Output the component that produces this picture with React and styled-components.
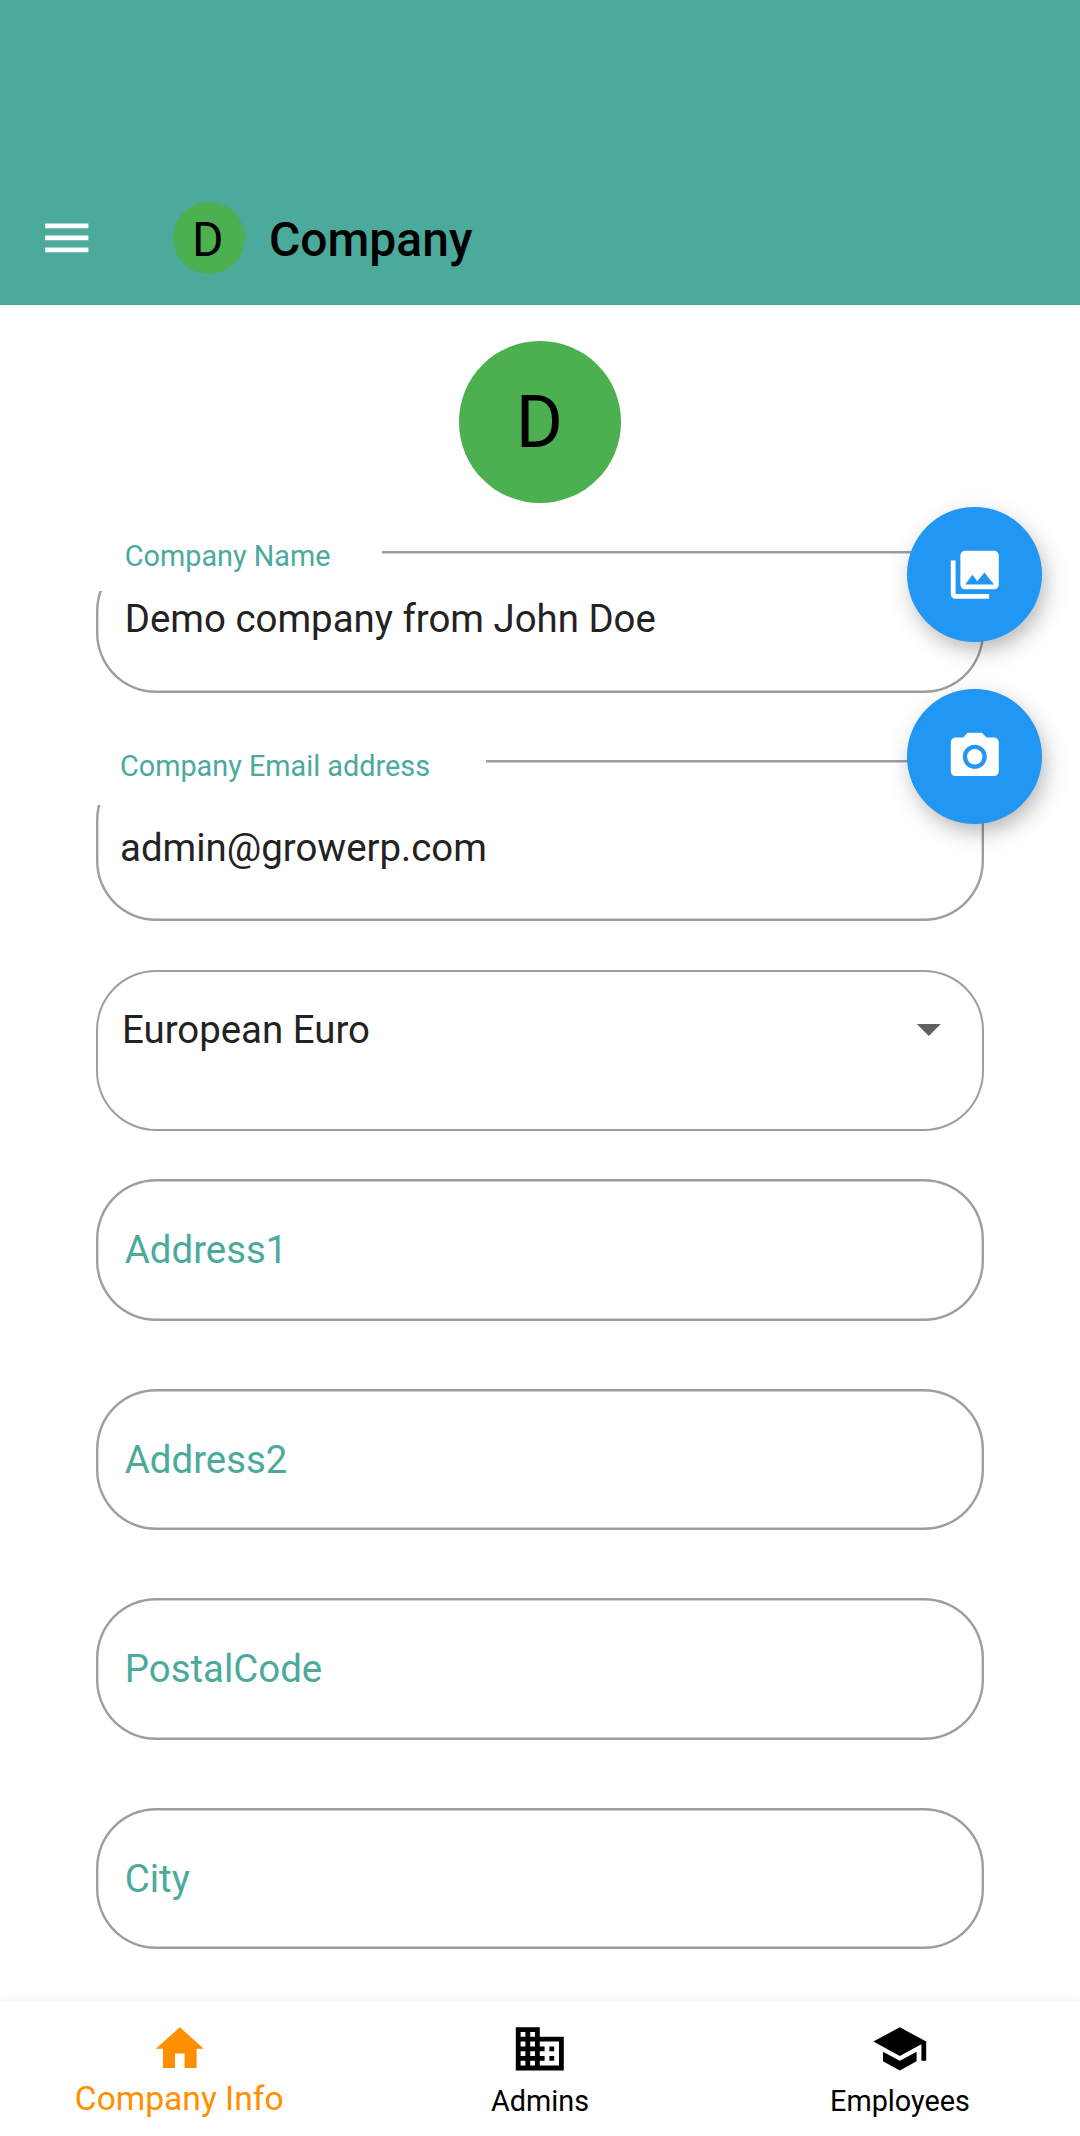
import React from "react";
import styled, { createGlobalStyle } from "styled-components";
import {
  MdArrowDropDown,
  MdBusiness,
  MdCameraAlt,
  MdHome,
  MdMenu,
  MdPhotoLibrary,
  MdSchool,
} from "react-icons/md";

const GlobalStyle = createGlobalStyle`
  *, *::before, *::after { box-sizing: border-box; }
  body {
    margin: 0;
    background: #fff;
    font-family: Roboto, "Liberation Sans", sans-serif;
  }
  button { font: inherit; border: 0; padding: 0; background: none; }
`;

const Screen = styled.div`
  position: relative;
  width: 1080px;
  height: 2136px;
  display: flex;
  flex-direction: column;
  overflow: hidden;
  background: #fff;
`;

const AppBar = styled.header`
  flex: none;
  height: 305.2px;
  padding: 171px 38.4px 0;
  display: flex;
  align-items: center;
  background: #4baa9b;
`;

const MenuButton = styled.button`
  display: flex;
  color: #fff;
  margin-right: 77px;
`;

const Avatar = styled.div`
  flex: none;
  width: ${(p) => p.$size}px;
  height: ${(p) => p.$size}px;
  border-radius: 50%;
  display: flex;
  align-items: center;
  justify-content: center;
  background: #4caf50;
  color: #000;
  font-size: ${(p) => p.$font}px;
  line-height: 1;
  padding: ${(p) => p.$nudge};
`;

const Title = styled.h1`
  margin: 3px 0 0 24px;
  font-size: 48px;
  font-weight: 500;
  line-height: 56px;
  color: #000;
`;

const Form = styled.main`
  flex: 1;
  min-height: 0;
  padding: 36px 96px 0;
  display: flex;
  flex-direction: column;
  align-items: center;
`;

const Field = styled.div`
  position: relative;
  flex: none;
  width: 100%;
  height: ${(p) => p.$height}px;
  margin-top: ${(p) => p.$gap}px;
  padding: ${(p) => p.$top}px 28px 0 ${(p) => p.$left}px;
  display: flex;
  align-items: flex-start;
  justify-content: space-between;
  border-radius: 60px;
  box-shadow: inset 0 0 0 ${(p) => p.$stroke || 2.4}px #9e9e9e;
`;

/* Opening in the outline that the floating label sits in */
const Notch = styled.div`
  position: absolute;
  left: 0;
  top: -1px;
  width: ${(p) => p.$width}px;
  height: ${(p) => p.$height}px;
  background: #fff;
`;

const FloatingLabel = styled.label`
  position: absolute;
  left: ${(p) => p.$left}px;
  top: ${(p) => p.$top}px;
  font-size: 28.8px;
  line-height: 34px;
  color: #4baa9b;
  white-space: nowrap;
`;

const Value = styled.span`
  position: relative;
  font-size: 38.4px;
  line-height: 45px;
  color: ${(p) => (p.$hint ? "#4baa9b" : "#222")};
  white-space: nowrap;
`;

const DropArrow = styled(MdArrowDropDown)`
  width: 57.6px;
  height: 57.6px;
  margin-top: -7px;
  margin-right: -2px;
  color: #616161;
`;

const FabColumn = styled.div`
  position: absolute;
  top: 507px;
  right: 38px;
  display: flex;
  flex-direction: column;
  gap: 47.6px;
`;

const Fab = styled.button`
  width: 135px;
  height: 134.6px;
  border-radius: 50%;
  display: flex;
  align-items: center;
  justify-content: center;
  background: #2196f3;
  color: #fff;
  box-shadow:
    4px 9px 18px -2px rgba(0, 0, 0, 0.19),
    4px 8px 30px 0 rgba(0, 0, 0, 0.12);
`;

const NavBar = styled.nav`
  flex: none;
  height: 134.4px;
  display: flex;
  background: #fff;
  box-shadow: 0 -4px 7px rgba(0, 0, 0, 0.04);
`;

const NavItem = styled.a`
  flex: 1;
  padding-top: 18.8px;
  display: flex;
  flex-direction: column;
  align-items: center;
  color: ${(p) => (p.$active ? "#ff8f00" : "#000")};
  font-size: ${(p) => (p.$active ? 33.6 : 28.8)}px;
  line-height: ${(p) => (p.$active ? 40 : 34)}px;
`;

const NavLabel = styled.span`
  margin-top: ${(p) => (p.$active ? 1.2 : 6.2)}px;
  margin-right: ${(p) => (p.$active ? 1.6 : 0)}px;
`;

const addressFields = ["Address1", "Address2", "PostalCode", "City"];
const tabs = [
  { label: "Company Info", icon: MdHome, active: true },
  { label: "Admins", icon: MdBusiness },
  { label: "Employees", icon: MdSchool },
];

export default function App() {
  return (
    <Screen>
      <GlobalStyle />
      <AppBar>
        <MenuButton aria-label="Menu">
          <MdMenu size={57.6} />
        </MenuButton>
        <Avatar $size={72} $font={48} $nudge="3px 2.4px 0 0">D</Avatar>
        <Title>Company</Title>
      </AppBar>

      <Form>
        <Avatar $size={161.4} $font={72} $nudge="2px 1px 0 0">D</Avatar>

        <Field $height={141.6} $gap={48.4} $top={45} $left={28.8}>
          <Notch $width={286} $height={41} />
          <FloatingLabel $left={28.8} $top={-12}>Company Name</FloatingLabel>
          <Value>Demo company from John Doe</Value>
        </Field>

        <Field $height={161.2} $gap={67.6} $top={65} $left={24}>
          <Notch $width={390} $height={46} />
          <FloatingLabel $left={24} $top={-11}>Company Email address</FloatingLabel>
          <Value>admin@growerp.com</Value>
        </Field>

        <Field $height={161.4} $gap={48.6} $top={37} $left={26} $stroke={2}>
          <Value>European Euro</Value>
          <DropArrow />
        </Field>

        {addressFields.map((name, i) => (
          <Field key={name} $height={141.6} $gap={i === 0 ? 47.6 : 68} $top={48.1} $left={28.8}>
            <Value $hint>{name}</Value>
          </Field>
        ))}
      </Form>

      <NavBar>
        {tabs.map(({ label, icon: Icon, active }) => (
          <NavItem key={label} $active={active}>
            <Icon size={57.6} />
            <NavLabel $active={active}>{label}</NavLabel>
          </NavItem>
        ))}
      </NavBar>

      <FabColumn>
        <Fab aria-label="Gallery">
          <MdPhotoLibrary size={57.6} />
        </Fab>
        <Fab aria-label="Camera">
          <MdCameraAlt size={57.6} />
        </Fab>
      </FabColumn>
    </Screen>
  );
}
